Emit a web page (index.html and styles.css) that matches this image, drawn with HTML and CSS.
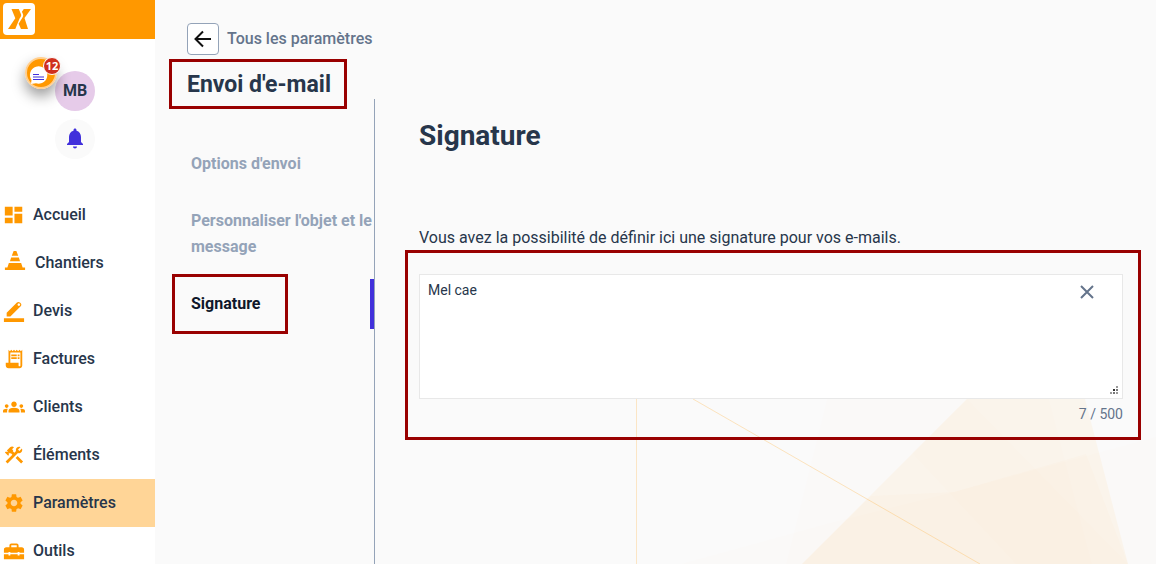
FILE: index.html
```html
<!DOCTYPE html>
<html lang="fr">
<head>
<meta charset="utf-8">
<meta name="viewport" content="width=device-width, initial-scale=1">
<title>Envoi d'e-mail – Signature</title>
<link rel="stylesheet" href="styles.css">
</head>
<body>
<div class="app">
  <aside class="sidebar">
    <header class="brand">
      <svg class="brand-logo" viewBox="0 0 32 32" aria-hidden="true">
        <rect width="32" height="32" rx="4" fill="#fff"/>
        <path d="M8.500 6h7.300l2.200 5.300c.4 1 .2 1.700-.4 2.600l-1 1.500L12.300 26H5l7.300-10.700zM20.800 6H28l-6.500 9L25 26h-7l-2.400-5.200 3.900-6.300c.8-1.300.9-2.400.3-3.800l-.9-2z" fill="#ff9800"/>
      </svg>
    </header>
    <div class="account">
      <div class="avatar-wrap">
        <button class="avatar" type="button">MB</button>
        <button class="chat" type="button" aria-label="Messages">
          <svg class="chat-icon" viewBox="0 0 32 32" aria-hidden="true">
            <circle cx="16" cy="16" r="15" fill="#ff9800" stroke="#ffcf90" stroke-width="2"/>
            <path d="M6 27l.5-4a8.700 8.700 0 1 1 4.500 3.300z" fill="#fff"/>
            <path d="M8 17.500h6M8 20h11M8 22.500h11" stroke="#4130db" stroke-width="1.200"/>
          </svg>
          <span class="chat-count">12</span>
        </button>
      </div>
      <button class="bell" type="button" aria-label="Notifications">
        <svg class="icon-24" viewBox="0 0 24 24" aria-hidden="true"><path fill="currentColor" d="M12 21.500c1.100 0 2-.9 2-2h-4c0 1.100.89 2 2 2zm6-6.500v-5c0-3.070-1.640-5.640-4.500-6.320V3c0-.83-.67-1.500-1.500-1.500s-1.500.67-1.500 1.500v.68C7.630 4.360 6 6.920 6 10v5l-2 2v1h16v-1l-2-2z"/></svg>
      </button>
    </div>
    <nav class="menu" aria-label="Menu principal">
      <a class="menu-item" href="#"><svg class="menu-icon" viewBox="0 0 24 24" aria-hidden="true"><path d="M2 12.500h8.500V3H2zM2 21h8.500v-6H2zM12.500 21H21V10.500h-8.500zM12.500 3v5.500H21V3z"/></svg>Accueil</a>
      <a class="menu-item" href="#"><svg class="menu-icon menu-icon-wide" viewBox="0 0 24 24" aria-hidden="true"><path d="M10.500-1h3l2 5h-7zM7.800 6h8.400l1.300 4h-11zM5.300 12h13.400l1.600 5H23v2.500H1V17h2.700z"/></svg>Chantiers</a>
      <a class="menu-item" href="#"><svg class="menu-icon" viewBox="0 0 24 24" aria-hidden="true"><path fill-rule="evenodd" d="M1 20h22v4H1zM4 14L15.200 2.800c1-1 2.300-1 3.300 0l.8.800c1 1 1 2.300 0 3.300L8 18H4zM16.300 4a1.400 1.400 0 1 0 2 2 1.400 1.400 0 0 0-2-2z"/></svg>Devis</a>
      <a class="menu-item" href="#"><svg class="menu-icon" viewBox="0 0 24 24" aria-hidden="true"><path d="M19.500 3.500 18 2l-1.500 1.500L15 2l-1.500 1.500L12 2l-1.500 1.500L9 2 7.500 3.500 6 2v14H3v3c0 1.660 1.340 3 3 3h12c1.660 0 3-1.340 3-3V2l-1.500 1.500zM19 19c0 .55-.45 1-1 1s-1-.45-1-1v-3H8V5h11v14zM9 7h6v2H9zm7 0h2v2h-2zM9 10h6v2H9zm7 0h2v2h-2z"/></svg>Factures</a>
      <a class="menu-item" href="#"><svg class="menu-icon" viewBox="0 0 24 24" aria-hidden="true"><path d="M12 12.750c1.630 0 3.070.39 4.240.9 1.080.48 1.760 1.560 1.760 2.730V18H6v-1.610c0-1.180.68-2.260 1.760-2.730 1.170-.52 2.610-.91 4.240-.91zM4 13c1.100 0 2-.9 2-2s-.9-2-2-2-2 .9-2 2 .9 2 2 2zm1.130 1.100c-.37-.06-.74-.1-1.130-.1-.99 0-1.930.21-2.780.58C.48 14.900 0 15.620 0 16.430V18h4.500v-1.610c0-.83.23-1.610.63-2.290zM20 13c1.100 0 2-.9 2-2s-.9-2-2-2-2 .9-2 2 .9 2 2 2zm4 3.430c0-.81-.48-1.530-1.220-1.850-.85-.37-1.790-.58-2.780-.58-.39 0-.76.04-1.130.1.400.68.63 1.460.63 2.290V18H24v-1.570zM12 6c1.660 0 3 1.340 3 3s-1.340 3-3 3-3-1.340-3-3 1.340-3 3-3z"/></svg>Clients</a>
      <a class="menu-item" href="#"><svg class="menu-icon" viewBox="0 0 24 24" aria-hidden="true"><path d="m13.783 15.172 2.121-2.121 5.996 5.996-2.121 2.121zM17.500 10c1.930 0 3.500-1.570 3.500-3.500 0-.58-.16-1.120-.41-1.600l-2.700 2.700-1.490-1.490 2.700-2.700c-.48-.25-1.020-.41-1.600-.41C15.570 3 14 4.570 14 6.500c0 .41.08.8.21 1.160l-1.850 1.850-1.780-1.780.71-.71-1.410-1.410L12 3.490c-1.170-1.170-3.070-1.170-4.240 0L4.220 7.030l1.410 1.410H2.810l-.71.71 3.540 3.540.71-.71V9.150l1.410 1.410.71-.71 1.780 1.780-7.410 7.410 2.120 2.120L16.340 9.790c.36.13.75.21 1.160.21z"/></svg>Éléments</a>
      <a class="menu-item menu-item-active" href="#" aria-current="page"><svg class="menu-icon" viewBox="0 0 24 24" aria-hidden="true"><path d="M19.140 12.940c.04-.3.06-.61.06-.94 0-.32-.02-.64-.07-.94l2.030-1.580c.18-.14.23-.41.12-.61l-1.920-3.320c-.12-.22-.37-.29-.59-.22l-2.390.96c-.5-.38-1.030-.7-1.620-.94l-.36-2.540c-.04-.24-.24-.41-.48-.41h-3.840c-.24 0-.43.17-.47.41l-.36 2.540c-.59.24-1.130.57-1.620.94l-2.390-.96c-.22-.08-.47 0-.59.22L2.740 8.870c-.12.21-.08.47.12.61l2.030 1.580c-.05.3-.09.63-.09.94s.02.64.07.94l-2.030 1.580c-.18.14-.23.41-.12.61l1.920 3.320c.12.22.37.29.59.22l2.390-.96c.5.38 1.030.7 1.620.94l.36 2.540c.05.24.24.41.48.41h3.840c.24 0 .44-.17.47-.41l.36-2.540c.59-.24 1.130-.56 1.620-.94l2.390.96c.22.08.47 0 .59-.22l1.920-3.320c.12-.22.07-.47-.12-.61l-2.010-1.580zM12 15.600c-1.980 0-3.600-1.620-3.600-3.600s1.620-3.600 3.600-3.600 3.600 1.620 3.600 3.600-1.620 3.600-3.600 3.600z"/></svg>Paramètres</a>
      <a class="menu-item" href="#"><svg class="menu-icon" viewBox="0 0 24 24" aria-hidden="true"><path fill-rule="evenodd" d="M1 14v-3.500C1 9 2 8 3.500 8H7V6c0-1.300.9-2.200 2.200-2.200h5.600C16.100 3.800 17 4.700 17 6v2h3.500C22 8 23 9 23 10.500V14h-5v-1h-2v1H8v-1H6v1zM9 8h6V5.800H9zM1 15.500h5V17h2v-1.500h8V17h2v-1.500h5V21H1z"/></svg>Outils</a>
    </nav>
  </aside>

  <main class="main">
    <svg class="backdrop" viewBox="0 0 520 165" aria-hidden="true">
      <path d="M191 0h222l43 165H150z" fill="#ff9800" fill-opacity=".006"/>
      <path d="M45 165L194 124 318 93 520 38V165z" fill="#e8a07a" fill-opacity=".015"/>
      <path d="M331 0h118l43 165H166z" fill="#ffb74d" fill-opacity=".07"/>
      <path d="M276 54L331 0 492 165H380z" fill="#ff8a65" fill-opacity=".01"/>
      <path d="M235 97L318 93 450 55 492 165H166z" fill="#ffa726" fill-opacity=".02"/>
      <path d="M0.500 0v165" fill="none" stroke="#ffb74d" stroke-opacity=".3"/>
      <path d="M57 0l287 165" fill="none" stroke="#ffb74d" stroke-opacity=".35"/>
    </svg>
    <div class="settings">
      <a class="back" href="#">
        <span class="back-icon"><svg class="icon-24" viewBox="0 0 24 24" aria-hidden="true"><path d="M20 12H5M12 4.500L4.500 12l7.500 7.500" fill="none" stroke="#111" stroke-width="2"/></svg></span>
        Tous les paramètres
      </a>
      <h1 class="page-title">Envoi d'e-mail</h1>
      <nav class="tabs" aria-label="Envoi d'e-mail">
        <a class="tab" href="#">Options d'envoi</a>
        <a class="tab" href="#">Personnaliser l'objet et le message</a>
        <a class="tab tab-active" href="#" aria-current="page">Signature</a>
      </nav>
    </div>
    <section class="content">
      <h2 class="section-title">Signature</h2>
      <label class="intro" for="signature">Vous avez la possibilité de définir ici une signature pour vos e-mails.</label>
      <div class="editor">
        <div class="field">
          <textarea class="signature" id="signature" maxlength="500">Mel cae</textarea>
          <button class="clear" type="button" aria-label="Effacer">
            <svg class="clear-icon" viewBox="0 0 14 14" aria-hidden="true"><path d="M1 1l12 12M13 1L1 13" fill="none" stroke="currentColor" stroke-width="2"/></svg>
          </button>
        </div>
        <div class="counter">7 / 500</div>
      </div>
    </section>
  </main>
</div>
</body>
</html>
```

FILE: styles.css
```css
* { box-sizing: border-box; }

body {
  margin: 0;
  font-family: Roboto, "Liberation Sans", sans-serif;
  font-size: 16px;
  line-height: 26px;
  color: #27364b;
  background: #fafafa;
}

a { color: inherit; text-decoration: none; }

button {
  padding: 0;
  border: 0;
  font: inherit;
  color: inherit;
  background: none;
  cursor: pointer;
}

svg { display: block; flex: none; overflow: visible; }

.icon-24 { width: 24px; height: 24px; }

.app { display: flex; height: 100vh; overflow: hidden; }

/* Sidebar */
.sidebar { flex: none; width: 155px; background: #fff; }
.brand { padding: 3px 3px 4px; background: #ff9800; }
.brand-logo { width: 32px; height: 32px; }

.account {
  display: flex;
  flex-direction: column;
  align-items: center;
  gap: 8px;
  padding: 32px 0;
  margin-right: 5px;
}
.avatar-wrap { position: relative; }
.avatar {
  display: block;
  width: 40px;
  height: 40px;
  border-radius: 50%;
  font-weight: 700;
  background: #e6cbe9;
}
.chat {
  position: absolute;
  top: -14px;
  left: -30px;
  border-radius: 50%;
  box-shadow: 0 7px 14px rgba(0, 0, 0, .4);
}
.chat-icon { width: 32px; height: 32px; }
.chat-count {
  position: absolute;
  top: 0;
  right: -4px;
  width: 18px;
  height: 18px;
  border: 1px solid #fff;
  border-radius: 50%;
  font: 700 11px/16px "Open Sans", sans-serif;
  color: #fff;
  background: #cf2f1d;
}
.bell {
  display: grid;
  place-items: center;
  width: 40px;
  height: 40px;
  border-radius: 50%;
  color: #4130db;
  background: #fafafa;
}

.menu-item {
  display: flex;
  align-items: center;
  gap: 8px;
  height: 48px;
  padding-left: 3px;
  font-weight: 500;
}
.menu-item-active { background: #ffd597; }
.menu-icon { width: 22px; height: 22px; fill: #ff9800; }
.menu-icon-wide { width: 24px; }

/* Main area */
.main { position: relative; display: flex; flex: 1; min-width: 0; }
.backdrop { position: absolute; right: 0; bottom: 0; width: 520px; height: 165px; }

.settings {
  position: relative;
  display: flex;
  flex-direction: column;
  flex: none;
  width: 220px;
  padding-top: 23px;
}
.back {
  display: flex;
  align-items: center;
  gap: 8px;
  margin-left: 32px;
  font-weight: 500;
  color: #64748b;
}
.back-icon {
  padding: 3px;
  border: 1px solid #94a3b8;
  border-radius: 4px;
  background: #fff;
}
.page-title {
  align-self: flex-start;
  margin: 4px 0 0 14px;
  padding: 10px 13px 8px 15px;
  border: 3px solid #900;
  font-size: 23px;
  line-height: 26px;
  font-weight: 700;
}
.tabs {
  display: flex;
  flex-direction: column;
  flex: 1;
  gap: 7px;
  margin-top: -10px;
  padding: 40px 0 0 36px;
  border-right: 1px solid #94a3b8;
}
.tab { padding: 12px 0; font-weight: 700; color: #94a3b8; }
.tab-active {
  position: relative;
  border-right: 4px solid #4130db;
  color: #0f172a;
}
.tab-active::before {
  content: "";
  position: absolute;
  inset: -5px 82px -5px -19px;
  border: 3px solid #900;
}

.content {
  position: relative;
  display: flex;
  flex-direction: column;
  flex: 1;
  min-width: 0;
  padding: 120px 15px 0 30px;
}
.section-title {
  margin: 0 14px;
  font-size: 28px;
  line-height: 32px;
  font-weight: 700;
}
.intro { margin: 74px 14px 0; line-height: 24px; }
.editor { padding: 21px 15px 9px 11px; border: 3px solid #900; }
.field { position: relative; display: flex; }
.signature {
  flex: 1;
  min-width: 0;
  height: 125px;
  padding: 6px 56px 6px 8px;
  border: 1px solid #e8e8e8;
  outline: 0;
  font: 14px/18px Roboto, "Liberation Sans", sans-serif;
  color: #27364b;
  background: #fff;
  resize: both;
}
.signature::-webkit-resizer {
  background:
    linear-gradient(#999, #999) 9px 3px / 2px 2px,
    linear-gradient(#333, #333) 6px 6px / 2px 2px,
    linear-gradient(#777, #777) 9px 6px / 2px 2px,
    linear-gradient(#999, #999) 3px 9px / 2px 2px,
    linear-gradient(#777, #777) 6px 9px / 2px 2px,
    linear-gradient(#999, #999) 9px 9px / 2px 2px;
  background-repeat: no-repeat;
}
.clear { position: absolute; top: 11px; right: 29px; color: #64748b; }
.clear-icon { width: 14px; height: 14px; }
.counter {
  margin-top: 2px;
  padding-bottom: 1px;
  font-size: 14px;
  text-align: right;
  color: #64748b;
}
```
